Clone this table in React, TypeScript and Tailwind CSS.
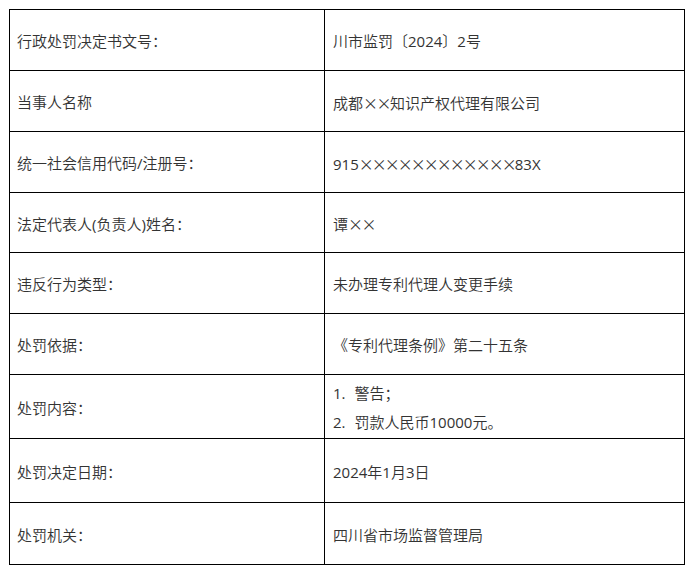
import React from "react";

function T({ s }: { s: string }) {
  const parts = s.split(/([\x21-\x7E]+)/);
  return (
    <>
      {parts.map((p, i) =>
        /^[\x21-\x7E]+$/.test(p) ? (
          <span key={i} className="font-normal">
            {p}
          </span>
        ) : (
          <React.Fragment key={i}>{p}</React.Fragment>
        )
      )}
    </>
  );
}

const X = ({ n, t }: { n: number; t: string }) => (
  <span className={t} style={{ fontFamily: '"Noto Sans CJK SC", sans-serif' }}>
    {"×".repeat(n)}
  </span>
);

const rows: { label: React.ReactNode; value: React.ReactNode; h: string }[] = [
  { label: "行政处罚决定书文号：", value: <T s="川市监罚〔2024〕2号" />, h: "h-[61px]" },
  {
    label: "当事人名称",
    value: (
      <span>
        成都<X n={2} t="tracking-[-1.5px]" />知识产权代理有限公司
      </span>
    ),
    h: "h-[61px]",
  },
  {
    label: <T s="统一社会信用代码/注册号：" />,
    value: (
      <span>
        <T s="915" />
        <X n={12} t="tracking-[-2px]" />
        <T s="83X" />
      </span>
    ),
    h: "h-[61px]",
  },
  {
    label: <T s="法定代表人(负责人)姓名：" />,
    value: (
      <span>
        谭<X n={2} t="tracking-[-1.5px]" />
      </span>
    ),
    h: "h-[60px]",
  },
  { label: "违反行为类型：", value: "未办理专利代理人变更手续", h: "h-[61px]" },
  { label: "处罚依据：", value: "《专利代理条例》第二十五条", h: "h-[61px]" },
  {
    label: "处罚内容：",
    value: (
      <div className="flex flex-col gap-[8px]">
        <div>
          <span className="font-normal">1.</span>
          <span className="ml-[9px]">警告；</span>
        </div>
        <div>
          <span className="font-normal">2.</span>
          <span className="ml-[9px]">
            <T s="罚款人民币10000元。" />
          </span>
        </div>
      </div>
    ),
    h: "h-[64px]",
  },
  { label: "处罚决定日期：", value: <T s="2024年1月3日" />, h: "h-[64px]" },
  { label: "处罚机关：", value: "四川省市场监督管理局", h: "h-[62px]" },
];

export default function App() {
  return (
    <div
      className="w-[696px] h-[581px] bg-white pt-[9px] pl-[9px] text-[15px] leading-[21px] font-[350] text-[#333333]"
      style={{ fontFamily: '"Open Sans", "Noto Sans CJK SC", sans-serif' }}
    >
      <div className="grid w-[676px] grid-cols-[315px_360px] border-l border-t border-black">
        {rows.map((r, i) => (
          <React.Fragment key={i}>
            <div className={`${r.h} flex items-center border-b border-r border-black pl-[7px] pt-[3px]`}>
              {r.label}
            </div>
            <div className={`${r.h} flex items-center border-b border-r border-black pl-[8px] pt-[3px]`}>
              {r.value}
            </div>
          </React.Fragment>
        ))}
      </div>
    </div>
  );
}
